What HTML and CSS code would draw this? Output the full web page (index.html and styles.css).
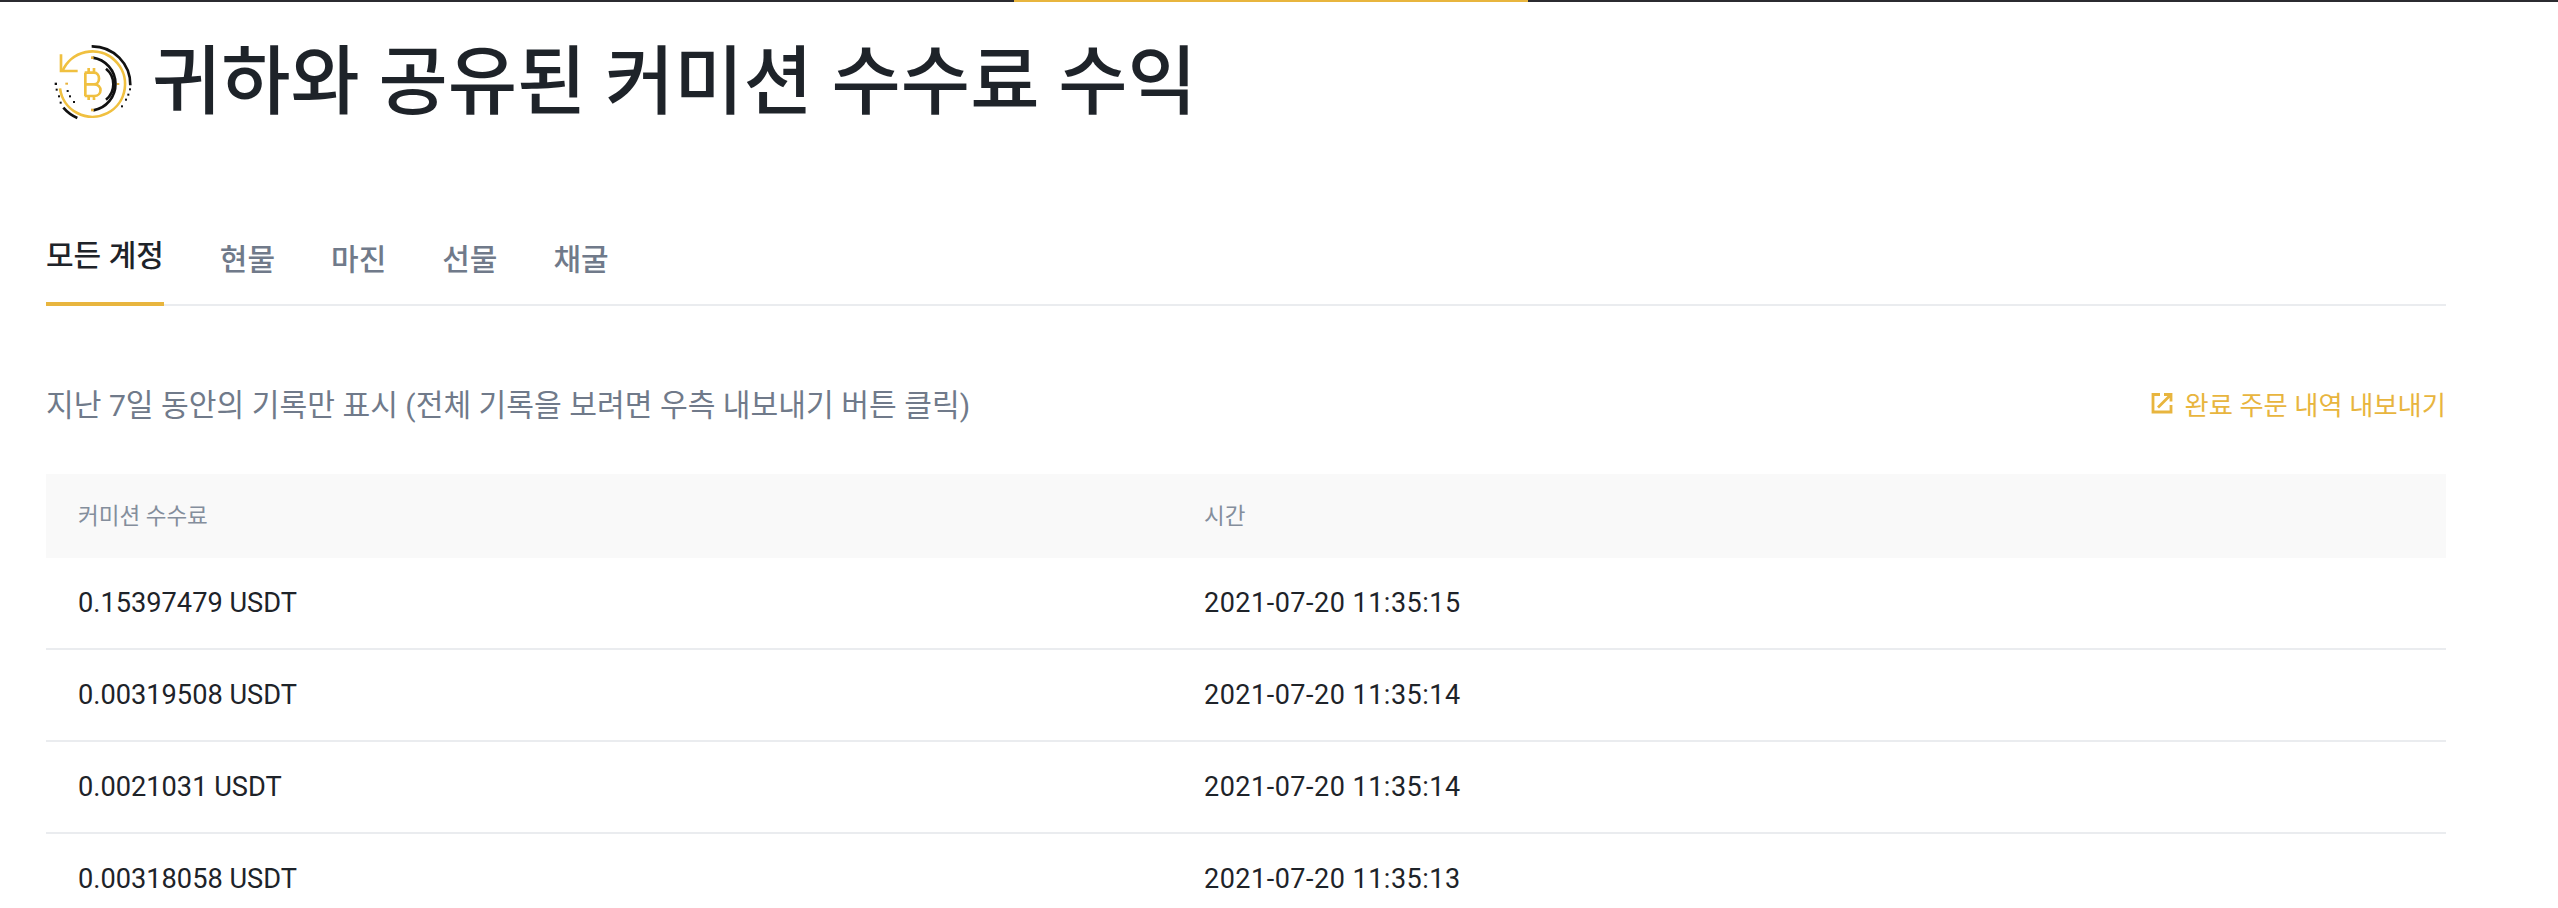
FILE: index.html
```html
<!DOCTYPE html>
<html lang="ko">
<head>
  <meta charset="UTF-8" />
  <meta name="viewport" content="width=device-width, initial-scale=1.0" />
  <title>커미션 수수료 수익</title>
  <link rel="stylesheet" href="styles.css">
</head>
<body>
  <div class="topbar"><div class="topbar-active"></div></div>

  <div class="container">
    <div class="title-row">
      <svg class="title-icon" viewBox="150 125 255 240" fill="none" stroke-width="8">
        <!-- black arcs -->
        <g stroke="#111">
          <path d="M275 138 A115 115 0 0 1 391 255" />
          <path d="M278 172 A80 80 0 0 1 280 330" />
          <path d="M318 205 A60 60 0 0 1 318 298" />
          <path d="M190 322 A115 115 0 0 0 232 353" />
        </g>
        <!-- yellow ring and arrow -->
        <g stroke="#f0c040">
          <path d="M187 213 A98 98 0 1 1 180 264" />
          <path d="M183 162 V212 H233" />
          <path d="M254 217 H282 C302 217 302 252 282 252 H256 M282 252 C308 252 308 287 282 287 H254 M256 217 V287 M266 203 V217 M282 203 V217 M266 287 V299 M282 287 V299" />
        </g>
        <g fill="#e8b23c">
          <rect x="273" y="168" width="8" height="8" />
          <rect x="273" y="325" width="8" height="8" />
          <rect x="351" y="248" width="7" height="6" />
          <rect x="196" y="247" width="8" height="6" />
        </g>
        <g fill="#111">
          <rect x="164" y="247" width="7" height="7" />
          <rect x="167" y="265" width="6" height="6" />
          <rect x="174" y="285" width="6" height="6" />
          <rect x="179" y="304" width="6" height="6" />
          <rect x="200" y="269" width="6" height="6" />
          <rect x="207" y="285" width="6" height="6" />
          <rect x="219" y="302" width="6" height="6" />
          <rect x="387" y="264" width="6" height="6" />
          <rect x="382" y="280" width="6" height="6" />
          <rect x="375" y="295" width="6" height="6" />
          <rect x="363" y="315" width="6" height="6" />
        </g>
      </svg>
      <h1>귀하와 공유된 커미션 수수료 수익</h1>
    </div>

    <div class="tabs">
      <a class="tab active">모든 계정</a>
      <a class="tab">현물</a>
      <a class="tab">마진</a>
      <a class="tab">선물</a>
      <a class="tab">채굴</a>
    </div>

    <div class="info-row">
      <span class="info-text">지난 7일 동안의 기록만 표시 (전체 기록을 보려면 우측 내보내기 버튼 클릭)</span>
      <a class="export-link">
        <svg class="export-icon" viewBox="0 0 22 22" fill="none" stroke="#e8b53e" stroke-width="2.8">
          <path d="M9 2.5 H2 V20 H20 V13" />
          <path d="M13 2.5 H20 V9.5 M20 2.5 L7 15.5" />
        </svg>
        완료 주문 내역 내보내기
      </a>
    </div>

    <table class="history">
      <thead>
        <tr><th class="col-amount">커미션 수수료</th><th>시간</th></tr>
      </thead>
      <tbody>
        <tr><td>0.15397479 USDT</td><td class="col-time">2021-07-20 11:35:15</td></tr>
        <tr><td>0.00319508 USDT</td><td class="col-time">2021-07-20 11:35:14</td></tr>
        <tr><td>0.0021031 USDT</td><td class="col-time">2021-07-20 11:35:14</td></tr>
        <tr><td>0.00318058 USDT</td><td class="col-time">2021-07-20 11:35:13</td></tr>
      </tbody>
    </table>
  </div>
</body>
</html>
```

FILE: styles.css
```css
html, body {
  height: 908px;
  overflow: hidden;
}
body {
  margin: 0;
  background: #fff;
  font-family: Roboto, "Noto Sans CJK KR", sans-serif;
  color: #1e2329;
}
.topbar {
  height: 2px;
  background: #2b2b30;
  padding-left: 1014px;
}
.topbar-active {
  width: 514px;
  height: 2px;
  background: #e8b53e;
}
.container {
  width: 2400px;
  margin-left: 46px;
}
.title-row {
  display: flex;
  align-items: center;
  height: 160px;
}
.title-icon {
  width: 85px;
  height: 80px;
  margin-left: 4px;
  flex-shrink: 0;
}
h1 {
  margin: 0 0 0 17px;
  font-size: 75.3px;
  font-weight: 500;
  line-height: 100px;
  white-space: nowrap;
}
.tabs {
  display: flex;
  gap: 56px;
  height: 144px;
  box-sizing: border-box;
  border-bottom: 2px solid #eaecef;
  align-items: flex-end;
}
.tab {
  font-size: 30px;
  font-weight: 500;
  line-height: 44px;
  padding-bottom: 24px;
  margin-bottom: -2px;
  color: #707a8a;
}
.tab.active {
  color: #1e2329;
  border-bottom: 4px solid #e8b53e;
}
.info-row {
  display: flex;
  justify-content: space-between;
  align-items: center;
  height: 168px;
  box-sizing: border-box;
  padding-top: 26px;
}
.info-text {
  font-size: 30.15px;
  color: #707a8a;
}
.export-link {
  display: flex;
  align-items: center;
  gap: 12px;
  font-size: 26.3px;
  color: #e8b53e;
}
.export-icon {
  width: 22px;
  height: 22px;
}
.history {
  width: 100%;
  border-collapse: collapse;
  table-layout: fixed;
}
.history th {
  height: 84px;
  background: #f9f9f9;
  padding: 0 0 4px 32px;
  box-sizing: border-box;
  text-align: left;
  font-size: 22.5px;
  font-weight: 400;
  color: #848e9c;
}
.col-amount {
  width: 1126px;
}
.history td {
  height: 90px;
  padding: 0 0 0 32px;
  font-size: 27.2px;
  border-bottom: 2px solid #eaecef;
}
.history .col-time {
  font-size: 27px;
  letter-spacing: 0.5px;
}
```
